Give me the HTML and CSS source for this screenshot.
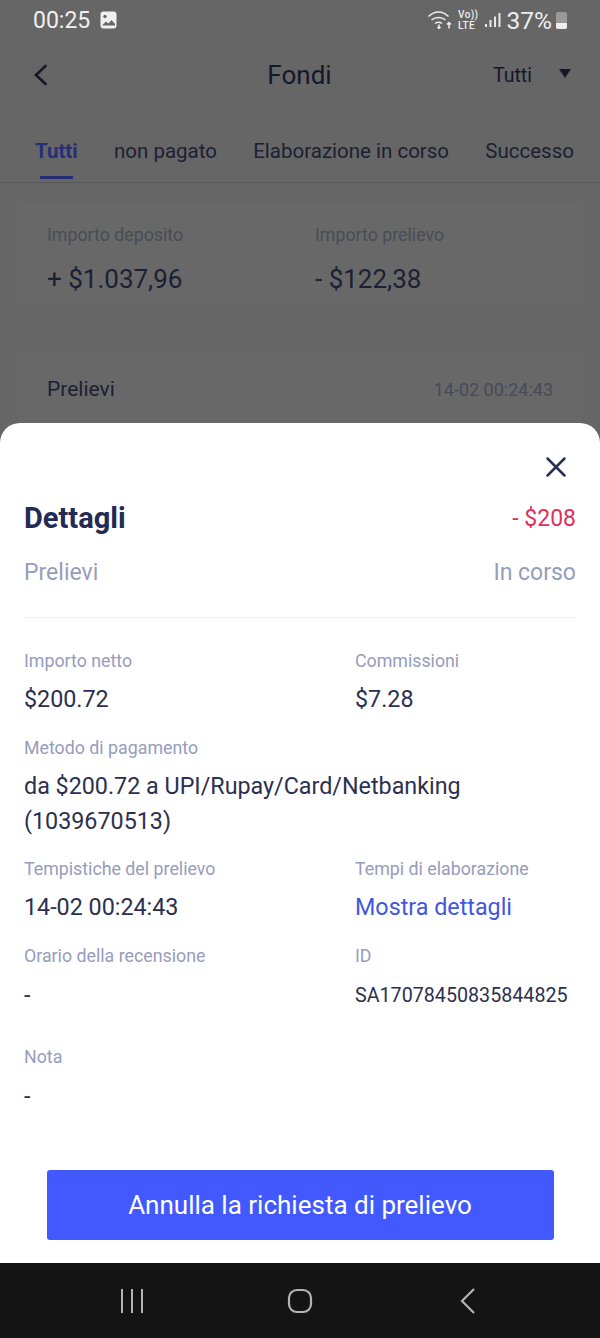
FILE: index.html
```html
<!DOCTYPE html>
<html lang="it">
<head>
  <meta charset="UTF-8" />
  <meta name="viewport" content="width=device-width, initial-scale=1.0" />
  <title>Fondi</title>
  <link rel="stylesheet" href="styles.css">
</head>
<body>
  <div class="screen">
    <div class="backdrop">
      <div class="status-bar">
        <div class="status-left">
          <span class="clock">00:25</span>
          <svg class="gallery-icon" width="17" height="18" viewBox="0 0 17 18">
            <rect x="0.5" y="0.5" width="16" height="17" rx="3" fill="#f0f0f0"/>
            <circle cx="5" cy="5.5" r="1.7" fill="#666"/>
            <path d="M2 14.500l4-4 2.500 2 3-3.500 3.500 4v1.500H2z" fill="#666"/>
          </svg>
        </div>
        <div class="status-right">
          <svg width="25" height="18" viewBox="0 0 25 18" fill="none" stroke="#eee" stroke-width="1.5">
            <path d="M0.500 5.500c6-6 14-6 20 0"/>
            <path d="M3.500 9c4-3.500 10-3.500 14 0"/>
            <path d="M7 12.500c2-1.500 5-1.500 7 0"/>
            <path d="M11 13.500v4M9.500 16l1.500 1.500 1.500-1.500"/>
            <path d="M21 17.500v-6M19 13.500l2-2 2 2"/>
          </svg>
          <div class="volte"><span>Vo))</span><span>LTE</span></div>
          <svg class="signal" width="16" height="14" viewBox="0 0 16 14" fill="#e8e8e8">
            <rect x="0" y="11" width="2" height="3"/>
            <rect x="4.500" y="7" width="2" height="7"/>
            <rect x="9" y="3.500" width="2" height="10.500"/>
            <rect x="13.500" y="0" width="2" height="14"/>
          </svg>
          <span class="battery-pct">37%</span>
          <div class="battery"><div class="battery-fill"></div></div>
        </div>
      </div>

      <header class="topbar">
        <svg class="back-icon" width="14" height="22" viewBox="0 0 14 22" fill="none" stroke="#14182a" stroke-width="2.600" stroke-linecap="round">
          <path d="M12.500 2L3 11l9.500 9"/>
        </svg>
        <h1 class="topbar-title">Fondi</h1>
        <div class="filter">
          <span>Tutti</span>
          <i class="caret"></i>
        </div>
      </header>

      <nav class="tabs">
        <a class="tab tab-active">Tutti</a>
        <a class="tab">non pagato</a>
        <a class="tab">Elaborazione in corso</a>
        <a class="tab">Successo</a>
      </nav>

      <section class="card summary">
        <div class="summary-col">
          <div class="muted">Importo deposito</div>
          <div class="amount">+ $1.037,96</div>
        </div>
        <div class="summary-col">
          <div class="muted">Importo prelievo</div>
          <div class="amount">- $122,38</div>
        </div>
      </section>

      <section class="card record">
        <span class="record-name">Prelievi</span>
        <span class="record-date">14-02 00:24:43</span>
      </section>
    </div>

    <div class="sheet">
      <div class="sheet-close">
        <svg width="24" height="24" viewBox="0 0 24 24" fill="none" stroke="#2a2f55" stroke-width="2.500" stroke-linecap="round">
          <path d="M3.500 3.500l17 17M20.500 3.500l-17 17"/>
        </svg>
      </div>
      <div class="sheet-head">
        <h2 class="sheet-title">Dettagli</h2>
        <span class="sheet-amount">- $208</span>
      </div>
      <div class="sheet-sub">
        <span>Prelievi</span>
        <span>In corso</span>
      </div>

      <div class="details">
        <div class="row row-first">
          <div class="field">
            <div class="label">Importo netto</div>
            <div class="value">$200.72</div>
          </div>
          <div class="field field-right">
            <div class="label">Commissioni</div>
            <div class="value">$7.28</div>
          </div>
        </div>
        <div class="row row-method">
          <div class="field">
            <div class="label">Metodo di pagamento</div>
            <div class="value value-wide">da $200.72 a UPI/Rupay/Card/Netbanking (1039670513)</div>
          </div>
        </div>
        <div class="row row-times">
          <div class="field">
            <div class="label">Tempistiche del prelievo</div>
            <div class="value">14-02 00:24:43</div>
          </div>
          <div class="field field-right">
            <div class="label">Tempi di elaborazione</div>
            <div class="value link">Mostra dettagli</div>
          </div>
        </div>
        <div class="row row-review">
          <div class="field">
            <div class="label">Orario della recensione</div>
            <div class="value value-dash">-</div>
          </div>
          <div class="field field-right">
            <div class="label">ID</div>
            <div class="value value-id">SA17078450835844825</div>
          </div>
        </div>
        <div class="row row-note">
          <div class="field">
            <div class="label">Nota</div>
            <div class="value value-note">-</div>
          </div>
        </div>
      </div>

      <button class="cancel-btn">Annulla la richiesta di prelievo</button>
    </div>

    <div class="navbar">
      <svg width="26" height="24" viewBox="0 0 26 24" fill="none" stroke="#b4b4b4" stroke-width="2">
        <path d="M3 0v24M13 0v24M23 0v24"/>
      </svg>
      <svg width="26" height="26" viewBox="0 0 26 26" fill="none" stroke="#b4b4b4" stroke-width="2.200">
        <rect x="2" y="2" width="22" height="22" rx="8"/>
      </svg>
      <svg width="16" height="26" viewBox="0 0 16 26" fill="none" stroke="#b4b4b4" stroke-width="2.200">
        <path d="M14 1L2 13l12 12"/>
      </svg>
    </div>
  </div>
</body>
</html>
```

FILE: styles.css
```css
* {
  box-sizing: border-box;
}
html, body {
  margin: 0;
  padding: 0;
}
body {
  font-family: Roboto, "Liberation Sans", sans-serif;
  background-color: #666;
}
.screen {
  position: relative;
  width: 600px;
  height: 1338px;
  display: flex;
  flex-direction: column;
  overflow: hidden;
}
.backdrop {
  flex: 1;
  background-color: #666;
  overflow: hidden;
}

/* status bar */
.status-bar {
  height: 40px;
  padding: 0 33px;
  display: flex;
  justify-content: space-between;
  align-items: center;
}
.status-left, .status-right {
  display: flex;
  align-items: center;
}
.clock {
  font-size: 23px;
  color: #f0f0f0;
}
.gallery-icon {
  margin-left: 10px;
}
.status-right {
  color: #eee;
}
.volte {
  display: flex;
  flex-direction: column;
  margin-left: 5px;
  font-size: 10px;
  line-height: 11px;
  letter-spacing: 0.4px;
  font-weight: 500;
}
.signal {
  margin-left: 6px;
}
.battery-pct {
  font-size: 24.500px;
  margin-left: 6px;
}
.battery {
  width: 11px;
  height: 17px;
  margin-left: 4px;
  border-radius: 2px;
  background-color: #999;
  display: flex;
  align-items: flex-end;
}
.battery-fill {
  width: 100%;
  height: 6px;
  background-color: #eee;
  border-radius: 0 0 2px 2px;
}

/* top bar */
.topbar {
  height: 70px;
  padding: 0 28px 0 33px;
  display: flex;
  justify-content: space-between;
  align-items: center;
}
.topbar-title {
  margin: 0 0 0 59px;
  font-size: 26px;
  font-weight: 400;
  color: #14182a;
}
.filter {
  display: flex;
  align-items: center;
  font-size: 19.500px;
  color: #14182a;
}
.caret {
  width: 0;
  height: 0;
  margin: 0 1px 3px 27px;
  border-left: 6px solid transparent;
  border-right: 6px solid transparent;
  border-top: 9px solid #14182a;
}

/* tabs */
.tabs {
  height: 73px;
  padding: 10px 26px 0 35px;
  display: flex;
  justify-content: space-between;
  align-items: center;
  border-bottom: 1px solid #585858;
  font-size: 20.500px;
  color: #1c2033;
}
.tab {
  position: relative;
}
.tab-active {
  color: #262f78;
  font-weight: 700;
}
.tab-active::after {
  content: "";
  position: absolute;
  left: 5px;
  right: 5px;
  bottom: -16px;
  height: 3px;
  background-color: #262f78;
}

/* cards behind the sheet */
.card {
  margin: 20px 18px 0;
  background-color: #686868;
}
.summary {
  height: 103px;
  padding: 21px 29px;
  display: flex;
}
.summary-col {
  flex: none;
  width: 268px;
}
.muted {
  font-size: 17.800px;
  color: #4a4c55;
}
.amount {
  margin-top: 19px;
  font-size: 26px;
  color: #1c2033;
}
.record {
  margin-top: 48px;
  height: 80px;
  padding: 0 29px 10px;
  display: flex;
  justify-content: space-between;
  align-items: center;
}
.record-name {
  font-size: 21px;
  color: #1c2033;
}
.record-date {
  font-size: 18px;
  color: #474a5a;
}

/* bottom sheet */
.sheet {
  position: absolute;
  top: 423px;
  left: 0;
  right: 0;
  bottom: 75px;
  padding: 0 24px;
  background-color: #fff;
  border-radius: 20px 20px 0 0;
}
.sheet-close {
  display: flex;
  justify-content: flex-end;
  padding: 32px 8px 0 0;
}
.sheet-head {
  margin-top: 22px;
  display: flex;
  justify-content: space-between;
  align-items: center;
}
.sheet-title {
  margin: 0;
  font-size: 29px;
  font-weight: 700;
  color: #232a56;
}
.sheet-amount {
  font-size: 23px;
  color: #e0305a;
}
.sheet-sub {
  margin-top: 24px;
  padding-bottom: 31px;
  display: flex;
  justify-content: space-between;
  font-size: 23px;
  color: #969cbc;
  border-bottom: 1px solid #eceef2;
}
.row {
  display: flex;
}
.row-first {
  margin-top: 32px;
}
.field {
  width: 331px;
}
.field-right {
  width: auto;
}
.label {
  font-size: 17.800px;
  line-height: 22px;
  color: #969cbc;
}
.value {
  margin-top: 14px;
  font-size: 23.300px;
  line-height: 27px;
  color: #2b3050;
}
.value-wide {
  width: 500px;
  line-height: 35px;
  margin-top: 10px;
}
.value-dash {
  margin-top: 15px;
}
.value-id {
  margin-top: 15px;
  font-size: 19.700px;
}
.value-note {
  margin-top: 15px;
}
.link {
  color: #3f57e0;
}
.row-method {
  margin-top: 24px;
}
.row-times {
  margin-top: 19px;
}
.row-review {
  margin-top: 24px;
}
.row-note {
  margin-top: 37px;
}
.cancel-btn {
  display: block;
  width: 507px;
  height: 70px;
  margin: 60px auto 0;
  background-color: #4159ff;
  color: #fff;
  border: none;
  border-radius: 3px;
  font-family: inherit;
  font-size: 26px;
}

/* android nav */
.navbar {
  height: 75px;
  background-color: #141414;
  display: grid;
  grid-template-columns: repeat(3, 168px);
  justify-content: center;
  justify-items: center;
  align-items: center;
}
```
